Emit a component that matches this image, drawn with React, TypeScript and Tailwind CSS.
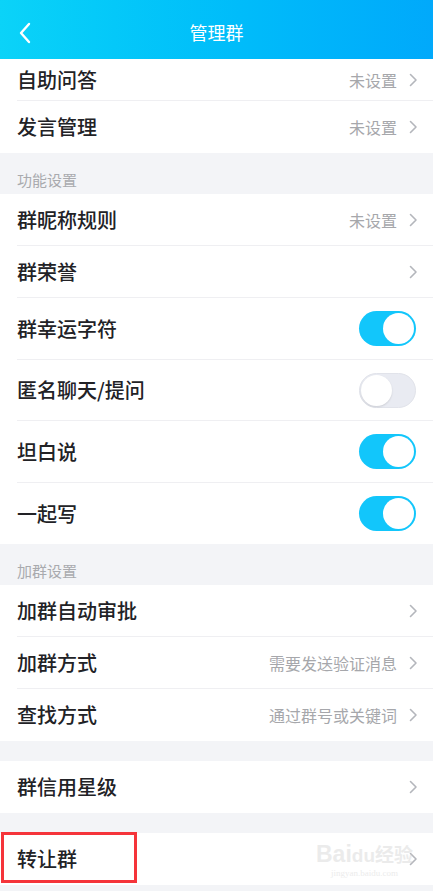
import React from "react";

const font = { fontFamily: '"Noto Sans CJK SC", "Noto Sans", sans-serif' };

function Chevron() {
  return (
    <svg width="9" height="14" viewBox="0 0 9 14" className="ml-[12px] shrink-0">
      <path d="M1.5 1.5 L7 7 L1.5 12.5" fill="none" stroke="#b4b6bc" strokeWidth="1.6" strokeLinecap="round" strokeLinejoin="round" />
    </svg>
  );
}

function Toggle({ on }: { on: boolean }) {
  return on ? (
    <div className="w-[57px] h-[35px] rounded-full bg-[#12c6fb] flex items-center justify-end pr-[2px] mr-[17px]">
      <div className="w-[31px] h-[31px] rounded-full bg-white" />
    </div>
  ) : (
    <div className="w-[57px] h-[35px] rounded-full bg-[#e9ebf2] border border-[#e1e3ea] flex items-center pl-[1px] mr-[17px]">
      <div className="w-[31px] h-[31px] rounded-full bg-white shadow-[0_1px_2px_rgba(0,0,0,0.12)]" />
    </div>
  );
}

type Row = { label: string; value?: string; arrow?: boolean; toggle?: boolean };

function Item({ row, last, h = 52 }: { row: Row; last?: boolean; h?: number }) {
  return (
    <div className="bg-white pl-[17px]">
      <div
        className={`flex items-center ${last ? "" : "border-b border-[#efeff2]"}`}
        style={{ height: h }}
      >
        <span className="flex-1 text-[20px] font-medium text-[#222226] leading-none">{row.label}</span>
        {row.value && <span className="text-[16px] text-[#a6a7ab] leading-none">{row.value}</span>}
        {row.arrow && (
          <span className="mr-[15px] flex items-center">
            <Chevron />
          </span>
        )}
        {row.toggle !== undefined && <Toggle on={row.toggle} />}
      </div>
    </div>
  );
}

function Section({ title }: { title: string }) {
  return (
    <div className="h-[41px] bg-[#f3f4f7] pl-[17px] flex items-end pb-[7px]">
      <span className="text-[15px] text-[#a9aaae] leading-none">{title}</span>
    </div>
  );
}

export default function App() {
  return (
    <div className="w-[433px] h-[891px] bg-[#f3f4f7] overflow-hidden relative" style={font}>
      <div className="h-[59px] bg-gradient-to-r from-[#0bd3f8] to-[#01a9fb] flex items-center relative">
        <svg width="14" height="22" viewBox="0 0 14 22" className="ml-[18px] mt-[6px]">
          <path d="M11 2 L3 11 L11 20" fill="none" stroke="white" strokeWidth="2.4" strokeLinecap="round" strokeLinejoin="round" />
        </svg>
        <span className="absolute left-0 right-0 text-center text-white text-[18px] top-[23px] leading-none">管理群</span>
      </div>

      <div className="flex flex-col">
        <Item row={{ label: "自助问答", value: "未设置", arrow: true }} h={42} />
        <Item row={{ label: "发言管理", value: "未设置", arrow: true }} last />
        <Section title="功能设置" />
        <Item row={{ label: "群昵称规则", value: "未设置", arrow: true }} />
        <Item row={{ label: "群荣誉", arrow: true }} />
        <Item row={{ label: "群幸运字符", toggle: true }} h={62} />
        <Item row={{ label: "匿名聊天/提问", toggle: false }} h={61} />
        <Item row={{ label: "坦白说", toggle: true }} h={62} />
        <Item row={{ label: "一起写", toggle: true }} h={61} last />
        <Section title="加群设置" />
        <Item row={{ label: "加群自动审批", arrow: true }} />
        <Item row={{ label: "加群方式", value: "需要发送验证消息", arrow: true }} />
        <Item row={{ label: "查找方式", value: "通过群号或关键词", arrow: true }} last />
        <div className="h-[20px]" />
        <Item row={{ label: "群信用星级", arrow: true }} last />
        <div className="h-[20px]" />
        <div className="relative">
          <Item row={{ label: "转让群", arrow: true }} last />
          <div className="absolute left-[1px] top-[-1px] w-[136px] h-[51px] border-[3px] border-[#f5343a]" />
          <div className="absolute left-[316px] top-[10px] flex flex-col items-center opacity-40 pointer-events-none">
            <span className="text-[23px] font-bold text-[#cfcfcf] leading-none" style={{ fontFamily: '"Liberation Sans", sans-serif' }}>
              Bai<span className="text-[19px]">du</span><span className="text-[19px]" style={font}>经验</span>
            </span>
            <span className="text-[9px] text-[#cfcfcf] leading-none mt-[3px]" style={{ fontFamily: '"Liberation Serif", serif' }}>
              jingyan.baidu.com
            </span>
          </div>
        </div>
      </div>
    </div>
  );
}
